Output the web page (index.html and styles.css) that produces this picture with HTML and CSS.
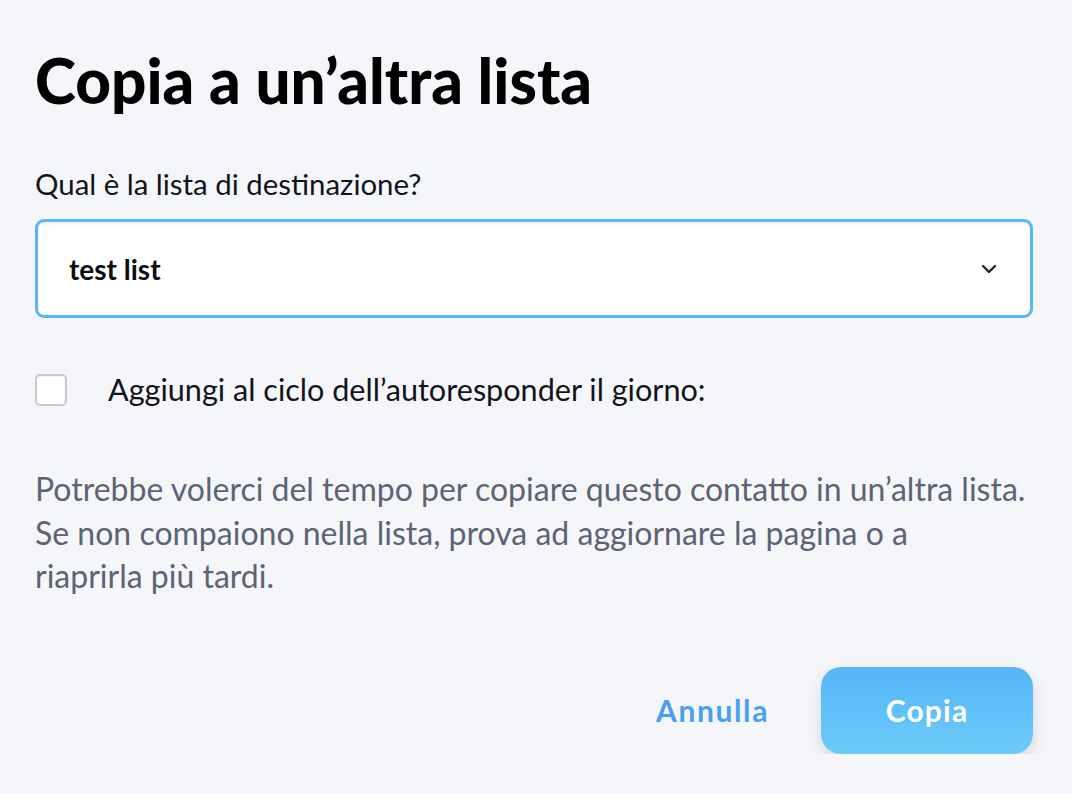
FILE: index.html
```html
<!DOCTYPE html>
<html lang="it">
<head>
<meta charset="utf-8">
<link rel="stylesheet" href="styles.css">
</head>
<body>
<main class="dialog">
  <h1 class="title">Copia a un’altra lista</h1>
  <label class="field-label">Qual è la lista di destinazione?</label>
  <div class="select">
    <span class="select-value">test list</span>
    <svg class="chevron" width="16" height="10" viewBox="0 0 16 10"><path d="M2 2l6 6 6-6" fill="none" stroke="#1f2330" stroke-width="2.4" stroke-linecap="round" stroke-linejoin="round"/></svg>
  </div>
  <div class="check-row">
    <span class="checkbox"></span>
    <span class="check-label">Aggiungi al ciclo dell’autoresponder il giorno:</span>
  </div>
  <p class="note">Potrebbe volerci del tempo per copiare questo contatto in un’altra lista.<br>Se non compaiono nella lista, prova ad aggiornare la pagina o a<br>riaprirla più tardi.</p>
  <div class="actions">
    <button class="btn-link">Annulla</button>
    <button class="btn-primary">Copia</button>
  </div>
</main>
</body>
</html>
```
FILE: styles.css
```css
html, body {
  margin: 0;
  padding: 0;
  background: #f5f6fa;
}
body {
  font-family: Lato, "Noto Sans", sans-serif;
  color: #0b0d12;
}
.dialog {
  padding: 42px 39px 0 35px;
  display: flex;
  flex-direction: column;
}
.title {
  margin: 0;
  font-size: 62px;
  font-weight: 900;
  line-height: 76px;
  color: #000;
}
.field-label {
  margin-top: 50px;
  font-size: 29.4px;
  line-height: 32px;
  color: #12141a;
}
.select {
  margin-top: 19px;
  box-sizing: border-box;
  height: 99px;
  border: 3px solid #5ab6f6;
  border-radius: 9px;
  background: #fff;
  display: flex;
  align-items: center;
  justify-content: space-between;
  padding: 0 33px 0 31px;
  box-shadow: inset 0 2px 3px rgba(0,0,0,0.06);
}
.select-value {
  font-size: 28px;
  font-weight: 700;
  color: #0b0d12;
}
.chevron { display: block; }
.check-row {
  margin-top: 54px;
  display: flex;
  align-items: center;
  gap: 41px;
}
.checkbox {
  width: 28px;
  height: 28px;
  border: 2px solid #c6c9d0;
  border-radius: 5px;
  background: #fff;
  flex: none;
  box-shadow: inset 0 1px 2px rgba(0,0,0,0.05);
}
.check-label {
  font-size: 30.6px;
  line-height: 36px;
  color: #12141a;
}
.note {
  margin: 59px 0 0;
  font-size: 32px;
  line-height: 43.5px;
  color: #5c6474;
}
.actions {
  margin-top: 69px;
  display: flex;
  justify-content: flex-end;
  align-items: center;
  gap: 52px;
}
.btn-link {
  border: none;
  background: none;
  padding: 0;
  font-family: inherit;
  font-size: 30px;
  font-weight: 700;
  color: #4aa0f0;
  letter-spacing: 1.6px;
}
.btn-primary {
  width: 212px;
  height: 87px;
  border: none;
  border-radius: 20px;
  background: linear-gradient(#55b5f7, #6ccbf9);
  color: #fff;
  font-family: inherit;
  font-size: 30px;
  font-weight: 700;
  letter-spacing: 1.2px;
  box-shadow: 0 6px 14px rgba(60, 80, 110, 0.18);
}
```
